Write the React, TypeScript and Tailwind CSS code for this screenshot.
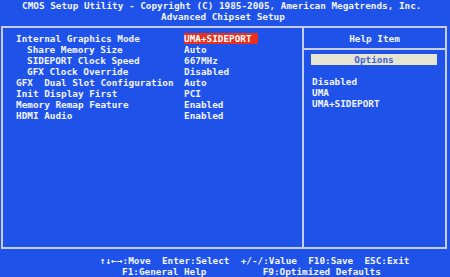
import React from "react";

const rows: { label: string; indent?: boolean; value: string; hl?: boolean }[] = [
  { label: "Internal Graphics Mode", value: "UMA+SIDEPORT", hl: true },
  { label: "Share Memory Size", indent: true, value: "Auto" },
  { label: "SIDEPORT Clock Speed", indent: true, value: "667MHz" },
  { label: "GFX Clock Override", indent: true, value: "Disabled" },
  { label: "GFX  Dual Slot Configuration", value: "Auto" },
  { label: "Init Display First", value: "PCI" },
  { label: "Memory Remap Feature", value: "Enabled" },
  { label: "HDMI Audio", value: "Enabled" },
];

export default function App() {
  return (
    <div className="w-[450px] h-[277px] overflow-hidden bg-[#1f52e8] text-[#f2f4ff] font-bold font-['DejaVu_Sans_Mono',monospace] text-[9.35px] leading-[11px] whitespace-pre">
      <div className="h-[11px] pl-[22px]">CMOS Setup Utility - Copyright (C) 1985-2005, American Megatrends, Inc.</div>
      <div className="h-[11px] pl-[161px]">Advanced Chipset Setup</div>
      <div className="mt-[4px] ml-[1px] w-[446px] h-[223px] border-2 border-[#c6cde6] flex">
        <div className="w-[301px] pt-[5px] pl-[13px] border-r-2 border-[#c6cde6]">
          {rows.map((r) => (
            <div key={r.label} className="flex h-[11px]">
              <div className={`w-[168px] ${r.indent ? "pl-[11px]" : ""}`}>{r.label}</div>
              {r.hl ? (
                <div className="w-[74px] bg-[#ea2f1c] text-white">{r.value}</div>
              ) : (
                <div>{r.value}</div>
              )}
            </div>
          ))}
        </div>
        <div className="flex-1 flex flex-col">
          <div className="pt-[5px] pb-[4px] border-b-2 border-[#c6cde6] text-center h-[22px]">Help Item</div>
          <div className="mt-[4px] ml-[7px] w-[126px] h-[11px] bg-[#e6e5d3] text-[#3f63d8] text-center">Options</div>
          <div className="mt-[11px] pl-[8px]">
            <div className="h-[11px]">Disabled</div>
            <div className="h-[11px]">UMA</div>
            <div className="h-[11px]">UMA+SIDEPORT</div>
          </div>
        </div>
      </div>
      <div className="mt-[6px] h-[11px] pl-[100px]">↑↓←→:Move  Enter:Select  +/-/:Value  F10:Save  ESC:Exit</div>
      <div className="h-[11px] pl-[122px]">F1:General Help          F9:Optimized Defaults</div>
    </div>
  );
}
